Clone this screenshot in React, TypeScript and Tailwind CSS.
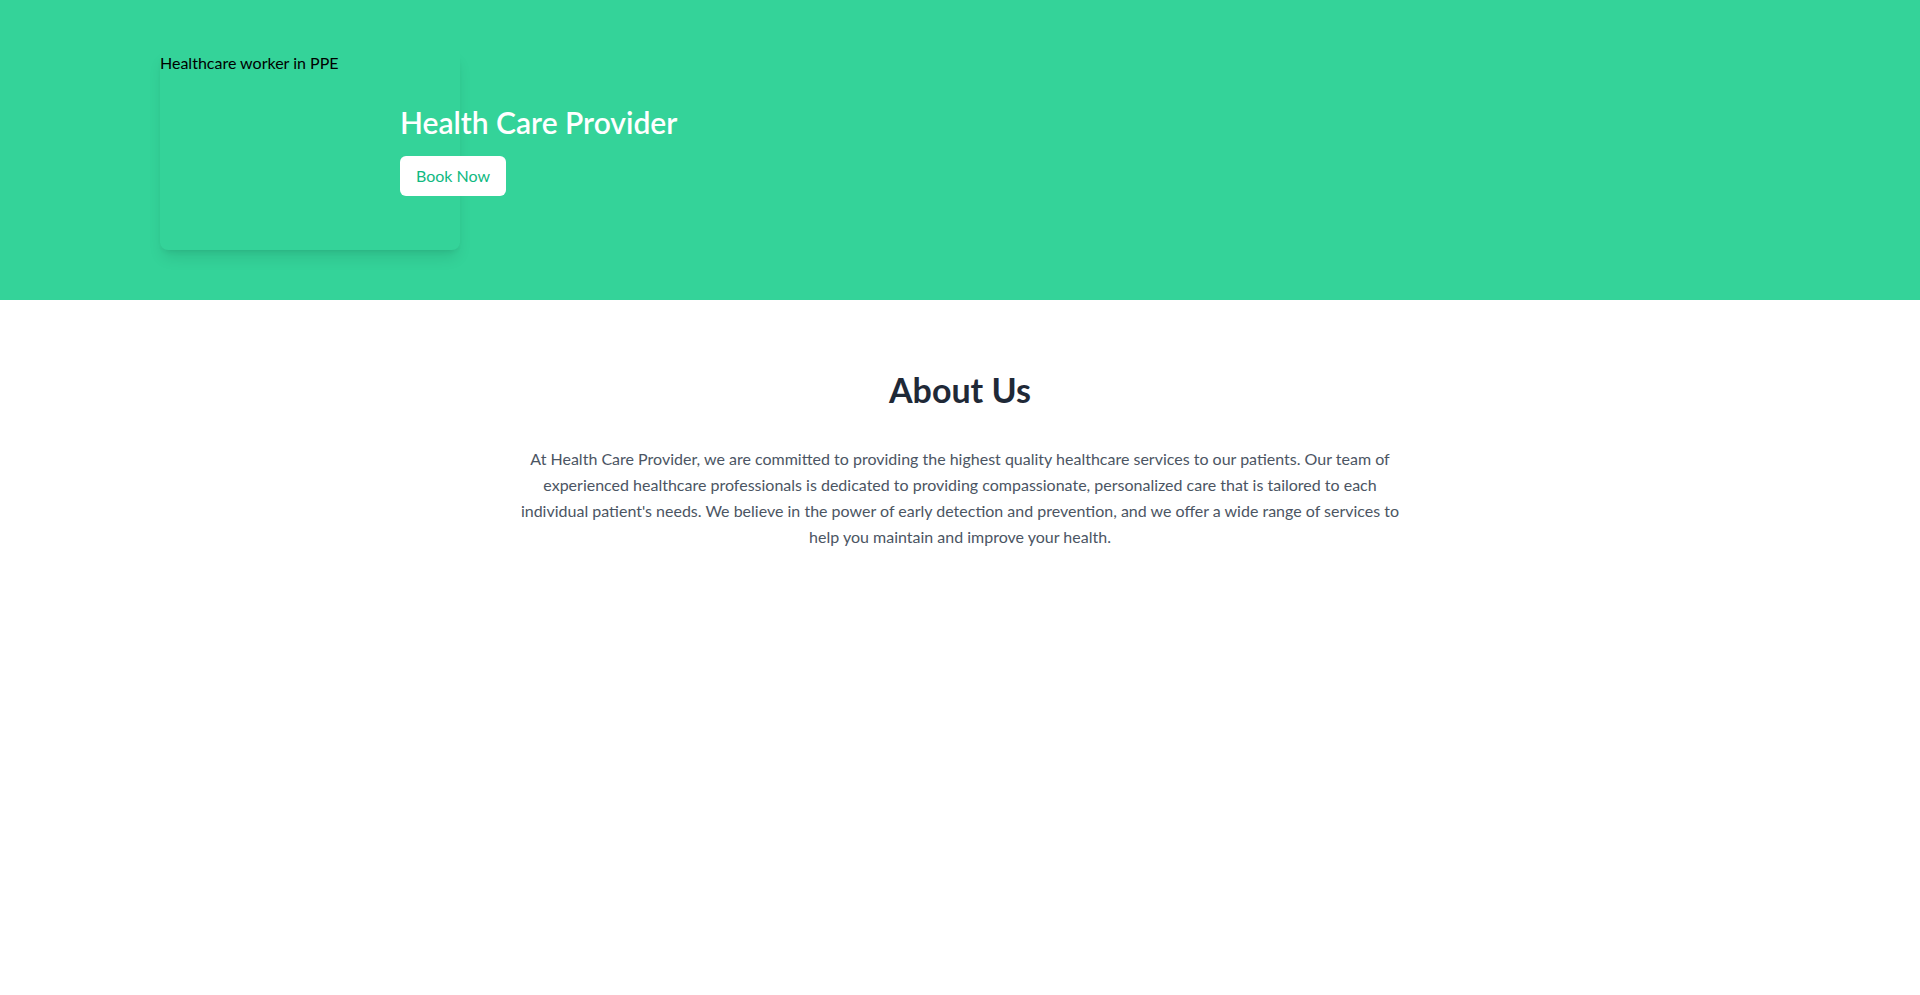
import React from 'react';

const Hero: React.FC = () => {
    return (
        <header className="bg-[#34d399] py-[50px]">
            <div className="flex items-center px-40">
                <div className="w-[240px] shrink-0">
                    {/* broken image: only the alt text shows */}
                    <div
                        role="img"
                        aria-label="Healthcare worker in PPE"
                        className="w-[300px] h-[200px] rounded-lg shadow-lg text-base text-black leading-6 pt-px"
                    >
                        Healthcare worker in PPE
                    </div>
                </div>
                <div className="relative">
                    <h1 className="text-3xl leading-9 font-semibold text-white mb-4">Health Care Provider</h1>
                    <button className="bg-white text-[#10b981] px-4 py-2 rounded-md text-base leading-6">
                        Book Now
                    </button>
                </div>
            </div>
        </header>
    );
};

const About: React.FC = () => {
    return (
        <section className="pt-[70px] pb-16 text-center px-4">
            <h2 className="text-[34px] leading-10 font-bold text-[#1f2937] mb-9">About Us</h2>
            <p className="max-w-4xl mx-auto text-base leading-relaxed text-[#4b5563]">
                At Health Care Provider, we are committed to providing the highest quality healthcare services to
                our patients. Our team of experienced healthcare professionals is dedicated to providing
                compassionate, personalized care that is tailored to each individual patient's needs. We believe in
                the power of early detection and prevention, and we offer a wide range of services to help you
                maintain and improve your health.
            </p>
        </section>
    );
};

export default function App() {
    return (
        <div className="min-h-screen bg-white font-['Lato',sans-serif]">
            <Hero />
            <About />
        </div>
    );
}
